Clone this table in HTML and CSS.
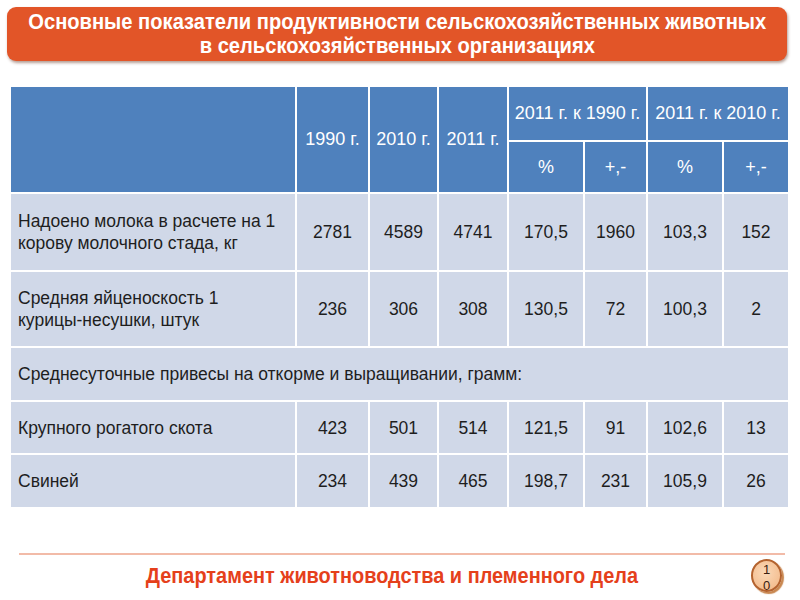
FILE: index.html
```html
<!DOCTYPE html>
<html lang="ru">
<head>
<meta charset="utf-8">
<title>Основные показатели</title>
<link rel="stylesheet" href="styles.css">
</head>
<body>
<div class="slide">
  <header class="title">
    <h1>Основные показатели продуктивности сельскохозяйственных животных<br>в сельскохозяйственных организациях</h1>
  </header>
  <table class="data">
    <colgroup>
      <col class="c-name"><col class="c-1990"><col class="c-2010"><col class="c-2011">
      <col class="c-p1"><col class="c-d1"><col class="c-p2"><col class="c-d2">
    </colgroup>
    <thead>
      <tr class="h1">
        <th rowspan="2"></th>
        <th rowspan="2">1990 г.</th>
        <th rowspan="2">2010 г.</th>
        <th rowspan="2">2011 г.</th>
        <th colspan="2">2011 г. к 1990 г.</th>
        <th colspan="2">2011 г. к 2010 г.</th>
      </tr>
      <tr class="h2">
        <th>%</th><th>+,-</th><th>%</th><th>+,-</th>
      </tr>
    </thead>
    <tbody>
      <tr class="r-tall">
        <td class="name">Надоено молока в расчете на 1<br>корову молочного стада, кг</td>
        <td>2781</td><td>4589</td><td>4741</td><td>170,5</td><td>1960</td><td>103,3</td><td>152</td>
      </tr>
      <tr class="r-tall2">
        <td class="name">Средняя яйценоскость 1<br>курицы-несушки, штук</td>
        <td>236</td><td>306</td><td>308</td><td>130,5</td><td>72</td><td>100,3</td><td>2</td>
      </tr>
      <tr class="r-sec">
        <td class="name" colspan="8">Среднесуточные привесы на откорме и выращивании, грамм:</td>
      </tr>
      <tr class="r-a">
        <td class="name">Крупного рогатого скота</td>
        <td>423</td><td>501</td><td>514</td><td>121,5</td><td>91</td><td>102,6</td><td>13</td>
      </tr>
      <tr class="r-b">
        <td class="name">Свиней</td>
        <td>234</td><td>439</td><td>465</td><td>198,7</td><td>231</td><td>105,9</td><td>26</td>
      </tr>
    </tbody>
  </table>
  <footer class="foot">
    <div class="rule"></div>
    <div class="foot-row">
      <span class="spacer"></span>
      <span class="dept">Департамент животноводства и племенного дела</span>
      <span class="badge-wrap"><span class="badge"><span class="b1">1</span><span class="b0">0</span></span></span>
    </div>
  </footer>
</div>
</body>
</html>
```

FILE: styles.css
```css
html, body {
  margin: 0;
  padding: 0;
  background: #ffffff;
}
.slide {
  width: 800px;
  height: 600px;
  overflow: hidden;
  font-family: "Liberation Sans", Arial, sans-serif;
  display: flex;
  flex-direction: column;
}
.title {
  margin: 7px 13px 0 7px;
  height: 54px;
  background: #e25528;
  border-radius: 9px;
  box-shadow: 1px 2px 3px rgba(90, 40, 20, 0.45);
  display: flex;
  align-items: center;
  justify-content: center;
}
.title h1 {
  margin: 0;
  color: #ffffff;
  font-family: "Liberation Sans", Arial, sans-serif;
  font-weight: bold;
  font-size: 22px;
  line-height: 24px;
  text-align: center;
  white-space: nowrap;
  transform: scaleX(0.915);
}
.data {
  margin: 24px 0 0 9px;
  border-collapse: separate;
  border-spacing: 2px;
  table-layout: fixed;
  width: 781px;
  font-size: 17.5px;
  color: #1e1e1e;
}
.c-name { width: 284px; }
.c-1990 { width: 71px; }
.c-2010 { width: 67px; }
.c-2011 { width: 68px; }
.c-p1 { width: 74px; }
.c-d1 { width: 61px; }
.c-p2 { width: 74px; }
.c-d2 { width: 64px; }
.data th {
  background: #4f81bd;
  color: #ffffff;
  font-weight: normal;
  font-size: 18px;
  padding: 0;
  text-align: center;
  vertical-align: middle;
  white-space: nowrap;
}
.data td {
  background: #d0d8e8;
  padding: 0;
  text-align: center;
  vertical-align: middle;
  line-height: 22px;
}
.data td.name {
  text-align: left;
  padding-left: 7px;
}
.h1 { height: 53px; }
.h2 { height: 50px; }
.r-tall { height: 76px; }
.r-tall2 { height: 74px; }
.r-sec { height: 52px; }
.r-a { height: 51px; }
.r-b { height: 52px; }
.foot {
  margin-top: 44px;
}
.rule {
  margin: 0 15px 0 19px;
  height: 2px;
  background: #f2bba8;
}
.foot-row {
  display: grid;
  grid-template-columns: 1fr auto 1fr;
  align-items: center;
  margin-top: 4px;
}
.dept {
  font-family: "Liberation Sans", Arial, sans-serif;
  font-weight: bold;
  font-size: 22px;
  color: #e5401b;
  display: inline-block;
  white-space: nowrap;
  transform: scaleX(0.905);
  margin-left: -16px;
}
.badge-wrap {
  display: flex;
  justify-content: flex-end;
  padding-right: 18px;
}
.badge {
  width: 27px;
  height: 29px;
  border-radius: 50%;
  background: radial-gradient(circle at 45% 40%, #fbd9b8 0%, #f4bf92 70%, #eaa878 100%);
  border: 2px solid #b4632f;
  box-shadow: 2px 2px 1px #c9874f;
  display: flex;
  flex-direction: column;
  align-items: center;
  overflow: hidden;
  font-family: "Liberation Sans", sans-serif;
  font-size: 13px;
  line-height: 13px;
  color: #3a2010;
}
.b1 { margin-top: 2px; }
.b0 { margin-top: 3px; }
```
